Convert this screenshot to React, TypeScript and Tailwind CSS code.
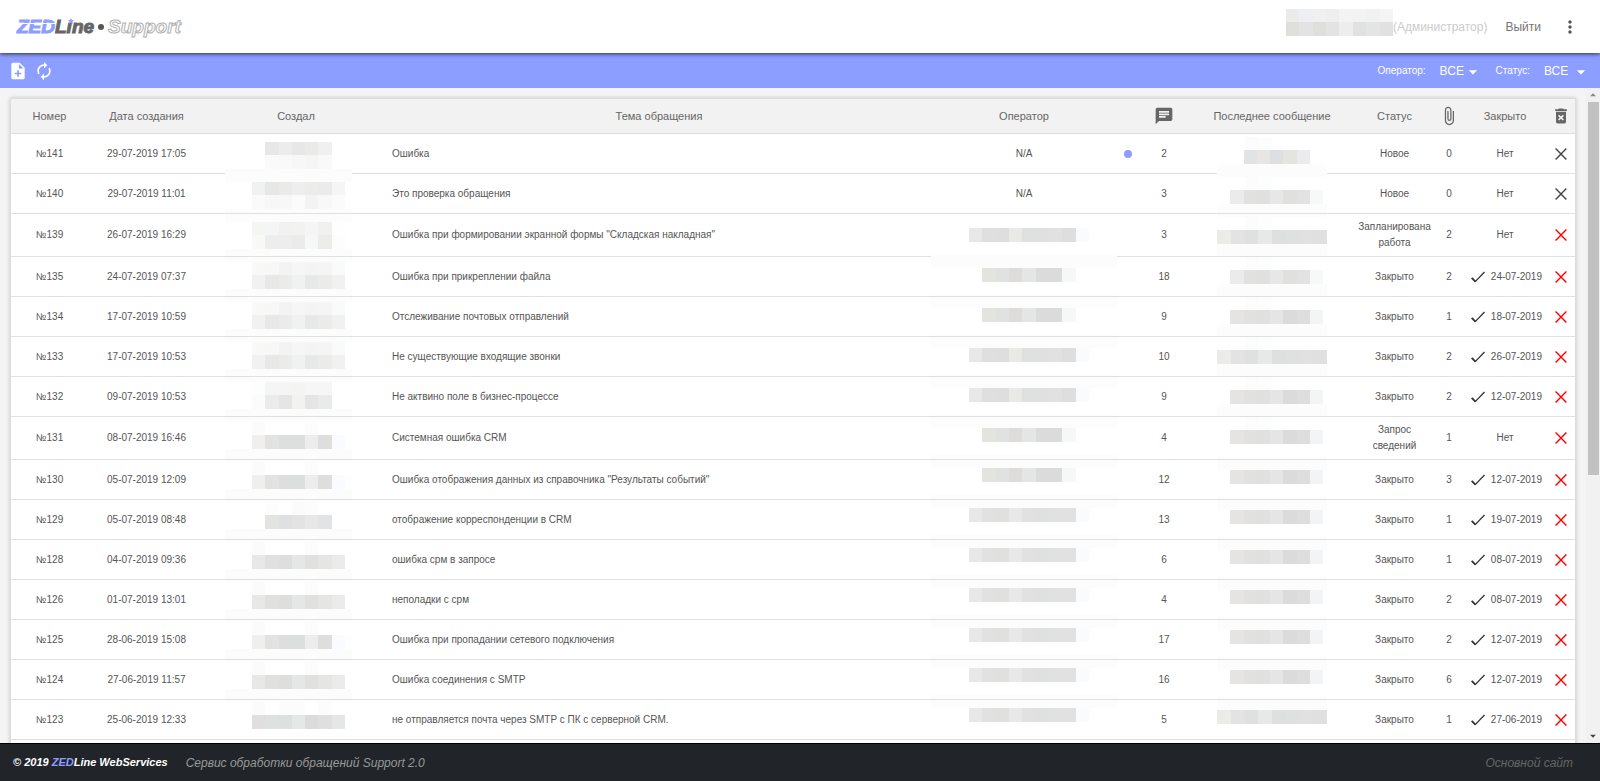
import type { ReactNode } from 'react';
import {
  MdArrowDropDown,
  MdArrowDropUp,
  MdAttachFile,
  MdAutorenew,
  MdChat,
  MdDeleteForever,
  MdMoreVert,
  MdNoteAdd,
} from 'react-icons/md';

type Ticket = {
  id: number;
  created: string;
  subject: string;
  messages: number;
  status: string;
  files: number;
  closed?: string;
  operator?: string;
  unread?: boolean;
  fresh?: boolean;
};

const tickets: Ticket[] = [
  { id: 141, created: '29-07-2019 17:05', subject: 'Ошибка', operator: 'N/A', unread: true, messages: 2, status: 'Новое', files: 0, fresh: true },
  { id: 140, created: '29-07-2019 11:01', subject: 'Это проверка обращения', operator: 'N/A', messages: 3, status: 'Новое', files: 0, fresh: true },
  { id: 139, created: '26-07-2019 16:29', subject: 'Ошибка при формировании экранной формы "Складская накладная"', messages: 3, status: 'Запланирована работа', files: 2 },
  { id: 135, created: '24-07-2019 07:37', subject: 'Ошибка при прикреплении файла', messages: 18, status: 'Закрыто', files: 2, closed: '24-07-2019' },
  { id: 134, created: '17-07-2019 10:59', subject: 'Отслеживание почтовых отправлений', messages: 9, status: 'Закрыто', files: 1, closed: '18-07-2019' },
  { id: 133, created: '17-07-2019 10:53', subject: 'Не существующие входящие звонки', messages: 10, status: 'Закрыто', files: 2, closed: '26-07-2019' },
  { id: 132, created: '09-07-2019 10:53', subject: 'Не актвино поле в бизнес-процессе', messages: 9, status: 'Закрыто', files: 2, closed: '12-07-2019' },
  { id: 131, created: '08-07-2019 16:46', subject: 'Системная ошибка CRM', messages: 4, status: 'Запрос сведений', files: 1 },
  { id: 130, created: '05-07-2019 12:09', subject: 'Ошибка отображения данных из справочника "Результаты событий"', messages: 12, status: 'Закрыто', files: 3, closed: '12-07-2019' },
  { id: 129, created: '05-07-2019 08:48', subject: 'отображение корреспонденции в CRM', messages: 13, status: 'Закрыто', files: 1, closed: '19-07-2019' },
  { id: 128, created: '04-07-2019 09:36', subject: 'ошибка срм в запросе', messages: 6, status: 'Закрыто', files: 1, closed: '08-07-2019' },
  { id: 126, created: '01-07-2019 13:01', subject: 'неполадки с срм', messages: 4, status: 'Закрыто', files: 2, closed: '08-07-2019' },
  { id: 125, created: '28-06-2019 15:08', subject: 'Ошибка при пропадании сетевого подключения', messages: 17, status: 'Закрыто', files: 2, closed: '12-07-2019' },
  { id: 124, created: '27-06-2019 11:57', subject: 'Ошибка соединения с SMTP', messages: 16, status: 'Закрыто', files: 6, closed: '12-07-2019' },
  { id: 123, created: '25-06-2019 12:33', subject: 'не отправляется почта через SMTP с ПК с серверной CRM.', messages: 5, status: 'Закрыто', files: 1, closed: '27-06-2019' },
];

// Mosaic rows that hide personal data: one colour per cell, '-' leaves the cell white
const band = 'fcfcfc';
const lightA = 'f8f8f7 f7f7f7 f3f3f3 f6f6f6 f4f4f4 f5f5f5 f9fbfb';
const darkA = 'f1f1f1 e8e8e8 ebebe9 f0f1f1 e7e9e8 ebebe9 f1f1f1';
const lightB = 'fbfbfb - - - fcfcfc - -';
const darkB = 'f1efee e1e2e1 dddfde dddfde ecedec dededc fafbfe';
const darkC = 'e8e8e8 e0e0de dedede e5e7e6 e0e0de e5e5e4 ebebeb';

const creators = [
  ['- e7e7e7 ececec e7e7e7 eaeae8 f0f0f0 -', '- fafafa f9f9f9 f7f7f7 f5f5f5 f9f9f9 -'],
  ['f1f1f1 e6e8e7 eaeae8 eeeeee ececea ebebeb f5f5f5', 'fafafa f7f7f7 f7f7f7 fbfbfb f3f3f3 f8f8f8 fbfbfb'],
  ['f5f5f3 f4f6f6 f1f1f1 f2f2f0 f5f5f5 f1f1ef fefefe', 'f8f8f6 ededed ededed eaebea f6f8f8 ecece9 fdfdfd'],
  [lightA, darkA],
  [lightA, darkA],
  [lightA, darkA],
  ['fdfdfd f4f6f6 f5f5f5 f4f4f2 f6f6f6 f6f6f6 -', 'fbfbfb ebebeb e5e5e5 f2f2f0 e5e5e5 e9ebea -'],
  [lightB, darkB],
  [lightB, darkB],
  ['- fdfdfd - fbfbfb fcfcfc - -', '- e3e3e1 dfe0e2 e3e3e3 e7e7e7 e2e3e5 -'],
  [lightB, darkC],
  [lightB, darkC],
  [lightB, darkB],
  [lightB, darkC],
  ['fbfbfb - fcfcfc fcfcfc - fcfcfc -', 'e0dedf dfe1e0 dedfdf e6e8e7 dbdbdb dfdfdf e5e7e6'],
];

const opLong = 'e8e8e8 dfdfdf dedede e9e9e6 dfe1e0 e0e0e0 e1e1e1 dedede fafbfd';
const opShort = '- e3e3e0 e0e2e1 dedcdb e4e6e5 dbdbdb dbdbdb f6f8f8 -';
const opLate = 'e8e8e8 e1e1e1 e0e1de e8e8e8 e1e1e1 e0e0e0 e0e2e1 e1e1e1 fafbfd';
const operators = [opLong, opShort, opShort, opLong, opLong, opShort, opShort, opLate, opLate, opLate, opLate, opLate, opLate];

const msgLong = 'ebebe8 e3e3e3 dfe1e0 e8e8e8 dde0df dfe1e0 e1e1e1 e0e0e0';
const msgMid = '- ebebeb e1e1df e0e0df e7e7e7 e0e0de e2e2e2 f7f8f8';
const msgCool = '- e5e4e2 e1e1e1 e0e0de e5e5e5 dbdbdb dedede f3f4f6';
const lastMessages = [
  '- - e2e3e5 e7e6e4 dedfe2 e4e4e1 ebebed -',
  msgMid, msgLong, msgMid, msgCool, msgLong, msgCool, msgCool,
  msgCool, msgCool, msgCool, msgCool, msgCool, msgCool, msgLong,
];

function MosaicRow({ cells, className = 'h-[13px]' }: { cells: string; className?: string }) {
  return (
    <div className={`flex ${className}`}>
      {cells.split(' ').map((c, i) => (
        <span key={i} className="flex-1" style={{ background: c === '-' ? '#ffffff' : `#${c}` }} />
      ))}
    </div>
  );
}

function CreatorMosaic() {
  return (
    <div aria-hidden className="absolute left-5 top-2 w-[127px] bg-white">
      {creators.map(([top, bottom], i) => (
        <div key={i}>
          <div className="pl-[27px] pr-[7px]">
            <MosaicRow cells={top} />
            <MosaicRow cells={bottom} className="h-[14px]" />
          </div>
          {i < creators.length - 1 && <MosaicRow cells={band} />}
        </div>
      ))}
    </div>
  );
}

function OperatorMosaic() {
  return (
    <div aria-hidden className="absolute inset-x-0 top-[14px] bg-white">
      {operators.map((cells, i) => (
        <div key={i}>
          <div className="w-[158px] pl-[38px]">
            <MosaicRow cells={cells} className="h-[14px]" />
          </div>
          <div className="h-[13px]" />
          {i < operators.length - 1 && <MosaicRow cells={band} />}
        </div>
      ))}
    </div>
  );
}

function LastMessageMosaic() {
  return (
    <div aria-hidden className="absolute left-1/2 top-[3px] w-[110px] -translate-x-1/2 bg-white">
      {lastMessages.map((cells, i) => (
        <div key={i}>
          <MosaicRow cells={i > 7 ? band : '- - fcfcfc fcfdfd - - - -'} />
          <MosaicRow cells={cells} className={cells === msgLong ? 'h-[14px]' : 'h-[14px] pr-1'} />
          <MosaicRow cells={i < 7 ? band : '-'} />
        </div>
      ))}
    </div>
  );
}

function Logo() {
  return (
    <a href="#" className="flex items-center text-[19px] font-bold italic leading-[25px] text-[#666666]">
      <span className="relative text-[#8c9eff] [-webkit-text-stroke:1px_#8c9eff]">
        ZED
        <span className="absolute inset-x-0 top-[9px] h-px bg-white" />
      </span>
      <span className="relative [-webkit-text-stroke:1px_#666666]">
        Lıne
        <svg viewBox="0 0 10 10" className="absolute left-[13px] top-1 size-[6px] fill-[#8c9eff]">
          <path d="M5 0l1.5 3.3 3.5.4-2.6 2.4.7 3.6L5 7.9 1.9 9.7l.7-3.6L0 3.7l3.5-.4z" />
        </svg>
      </span>
      <span className="mx-1 size-[6px] rounded-full bg-[#555555]" />
      <span className="text-white [-webkit-text-stroke:1px_#b0b0b0]">Support</span>
    </a>
  );
}

function CheckIcon() {
  return (
    <svg viewBox="0 0 14 12" className="h-3 w-[14px] fill-none stroke-[#333333]">
      <path d="M.7 6.8L4.4 10.6" strokeWidth="1.9" />
      <path d="M4 10.9L13.5 1" strokeWidth="1.3" />
    </svg>
  );
}

function CrossIcon({ className }: { className: string }) {
  return (
    <svg viewBox="0 0 12 12" className={`size-3 fill-none ${className}`}>
      <path d="M.6.6l10.8 10.8M11.4.6L.6 11.4" strokeWidth="1.4" />
    </svg>
  );
}

function Filter({ id, label, className }: { id: string; label: string; className: string }) {
  return (
    <div className="flex items-center">
      <label htmlFor={id} className="text-[10px]">{label}</label>
      <span className={`relative ml-[14px] ${className}`}>
        <select id={id} className="block h-5 w-full appearance-none bg-transparent text-[12px] outline-none">
          <option>ВСЕ</option>
        </select>
        <MdArrowDropDown className="pointer-events-none absolute right-0 top-px size-5" />
      </span>
    </div>
  );
}

function Th({ children, className = '' }: { children?: ReactNode; className?: string }) {
  return <th className={`border-b border-[#dddddd] p-0 text-center font-normal ${className}`}>{children}</th>;
}

function Td({ children, className = 'text-center' }: { children?: ReactNode; className?: string }) {
  return <td className={`border-b border-[#e0e0e0] p-0 ${className}`}>{children}</td>;
}

export default function App() {
  return (
    <div className="flex h-screen flex-col overflow-hidden bg-[#f4f4f4] font-['Liberation_Sans',Arial,sans-serif] text-[#555555]">
      <header className="relative z-10 flex h-[53px] shrink-0 items-center bg-white pl-[17px] pr-5 shadow-[0_1px_4px_rgba(0,0,0,0.7)]">
        <Logo />
        <div className="ml-auto flex items-center text-[12px]">
          <div aria-hidden className="mb-2 w-[107px]">
            <MosaicRow cells="ebebe9 eeeff2 f0f0f0 eeeeee f3f3f3 f2f2f0 f1f1f1 f4f4f4" />
            <MosaicRow cells="dfdfdc e3e3e3 dfdfdd e3e3e3 ededed e1e1e1 e3e5e4 e1e1e1" className="h-[14px]" />
          </div>
          <span className="text-[#cccccc]">(Администратор)</span>
          <a href="#" className="ml-[18px] text-[#757575]">Выйти</a>
          <button type="button" aria-label="Меню" className="ml-[19px] text-[#555555]">
            <MdMoreVert className="size-5" />
          </button>
        </div>
      </header>

      <div className="flex h-[35px] shrink-0 items-center bg-[#8c9eff] pl-2 pr-[9px] text-white">
        <button type="button" aria-label="Новое обращение">
          <MdNoteAdd className="size-5" />
        </button>
        <button type="button" aria-label="Обновить" className="ml-[6px]">
          <MdAutorenew className="size-5" />
        </button>
        <div className="ml-auto flex items-center gap-[13px]">
          <Filter id="operator" label="Оператор:" className="w-[43px]" />
          <Filter id="status" label="Статус:" className="w-[47px]" />
        </div>
      </div>

      <main className="flex min-h-0 flex-1">
        <div className="min-w-0 flex-1 overflow-hidden pl-[10px] pr-[10px] pt-[10px]">
          <div className="border border-[#dddddd] bg-white shadow-[0_0_4px_rgba(0,0,0,0.2)]">
            <table className="w-full table-fixed border-separate border-spacing-0 text-[10px] leading-4">
              <thead className="bg-[#f2f2f2] text-[11px] text-[#666666]">
                <tr className="h-[35px]">
                  <Th className="w-[77px]">Номер</Th>
                  <Th className="w-[117px]">Дата создания</Th>
                  <Th className="w-[182px]">Создал</Th>
                  <Th>Тема обращения</Th>
                  <Th className="w-[186px]">Оператор</Th>
                  <Th className="w-[21px]" />
                  <Th className="w-[52px]"><MdChat className="mx-auto size-5" /></Th>
                  <Th className="w-[164px]">Последнее сообщение</Th>
                  <Th className="w-[81px]">Статус</Th>
                  <Th className="w-[28px]"><MdAttachFile className="mx-auto size-5" /></Th>
                  <Th className="w-[84px]">Закрыто</Th>
                  <Th className="w-[28px]"><MdDeleteForever className="mx-auto size-5" /></Th>
                </tr>
              </thead>
              <tbody>
                {tickets.map((t, i) => (
                  <tr key={t.id} className="h-10">
                    <Td>№{t.id}</Td>
                    <Td>{t.created}</Td>
                    <Td className="relative">{i === 0 && <CreatorMosaic />}</Td>
                    <Td className="pl-[5px]!">{t.subject}</Td>
                    <Td className="relative text-center">
                      {t.operator}
                      {i === 2 && <OperatorMosaic />}
                    </Td>
                    <Td>{t.unread && <span className="mx-auto block size-2 rounded-full bg-[#8c9eff]" />}</Td>
                    <Td>{t.messages}</Td>
                    <Td className="relative">{i === 0 && <LastMessageMosaic />}</Td>
                    <Td className="px-1! py-[5px]! text-center">{t.status}</Td>
                    <Td>{t.files}</Td>
                    <Td>
                      {t.closed ? (
                        <span className="flex items-center justify-end gap-[6px] pr-[5px]">
                          <CheckIcon />
                          {t.closed}
                        </span>
                      ) : (
                        'Нет'
                      )}
                    </Td>
                    <Td>
                      <button type="button" aria-label={`Удалить №${t.id}`} className="mx-auto block">
                        <CrossIcon className={t.fresh ? 'stroke-[#444444]' : 'stroke-[#ff0000]'} />
                      </button>
                    </Td>
                  </tr>
                ))}
                <tr className="h-10">
                  <td colSpan={12} />
                </tr>
              </tbody>
            </table>
          </div>
        </div>

        {/* Scrollbar */}
        <div aria-hidden className="flex w-[14px] shrink-0 flex-col items-center bg-[#f1f1f1]">
          <MdArrowDropUp className="size-[14px] text-[#888888]" />
          <div className="h-[57%] w-[11px] bg-[#c1c1c1]" />
          <MdArrowDropDown className="mt-auto size-[14px] text-[#444444]" />
        </div>
      </main>

      <footer className="z-10 flex h-[38px] shrink-0 items-center border-t border-black bg-[#212529] pl-[13px] pr-[27px] text-[12px] italic">
        <span className="text-[11px] font-bold text-white">
          © 2019 <span className="text-[#8c9eff]">ZED</span>Line WebServices
        </span>
        <span className="ml-[18px] text-[#999999]">Сервис обработки обращений Support 2.0</span>
        <a href="#" className="ml-auto text-[#666666]">Основной сайт</a>
      </footer>
    </div>
  );
}
